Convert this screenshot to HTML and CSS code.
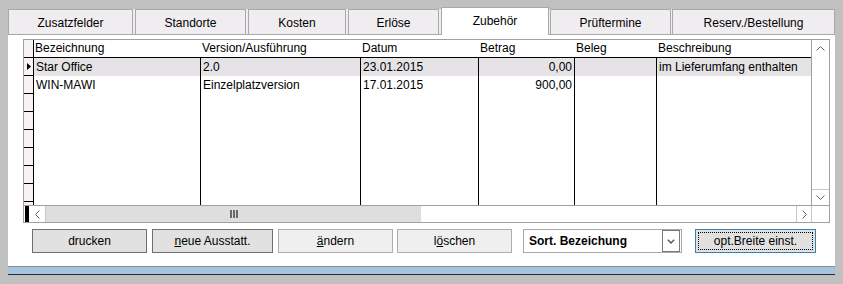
FILE: index.html
```html
<!DOCTYPE html>
<html lang="de">
<head>
<meta charset="UTF-8" />
<title>Zubehör</title>
<link rel="stylesheet" href="styles.css">
</head>
<body>

<div class="window">
  <!-- Tab strip -->
  <div class="tabs">
    <div class="tab tab-zusatz">Zusatzfelder</div>
    <div class="tab tab-standorte">Standorte</div>
    <div class="tab tab-kosten">Kosten</div>
    <div class="tab tab-erloese">Erlöse</div>
    <div class="tab tab-zubehoer active">Zubehör</div>
    <div class="tab tab-pruef">Prüftermine</div>
    <div class="tab tab-reserv">Reserv./Bestellung</div>
  </div>

  <div class="panel">
    <!-- Data grid -->
    <div class="grid">
      <div class="grid-main">
        <div class="grid-data">
          <div class="row head">
            <div class="cell ind"></div>
            <div class="cell c-bez">Bezeichnung</div>
            <div class="cell c-ver">Version/Ausführung</div>
            <div class="cell c-dat">Datum</div>
            <div class="cell c-bet">Betrag</div>
            <div class="cell c-bel">Beleg</div>
            <div class="cell c-bes">Beschreibung</div>
          </div>
          <div class="row sel">
            <div class="cell ind current">
              <svg width="5" height="7" viewBox="0 0 5 7"><path d="M0 0 L4 3.5 L0 7 Z" fill="#000"/></svg>
            </div>
            <div class="cell c-bez">Star Office</div>
            <div class="cell c-ver">2.0</div>
            <div class="cell c-dat">23.01.2015</div>
            <div class="cell c-bet num">0,00</div>
            <div class="cell c-bel"></div>
            <div class="cell c-bes">im Lieferumfang enthalten</div>
          </div>
          <div class="row">
            <div class="cell ind"></div>
            <div class="cell c-bez">WIN-MAWI</div>
            <div class="cell c-ver">Einzelplatzversion</div>
            <div class="cell c-dat">17.01.2015</div>
            <div class="cell c-bet num">900,00</div>
            <div class="cell c-bel"></div>
            <div class="cell c-bes"></div>
          </div>
          <div class="row"><div class="cell ind"></div><div class="cell c-bez"></div><div class="cell c-ver"></div><div class="cell c-dat"></div><div class="cell c-bet"></div><div class="cell c-bel"></div><div class="cell c-bes"></div></div>
          <div class="row"><div class="cell ind"></div><div class="cell c-bez"></div><div class="cell c-ver"></div><div class="cell c-dat"></div><div class="cell c-bet"></div><div class="cell c-bel"></div><div class="cell c-bes"></div></div>
          <div class="row"><div class="cell ind"></div><div class="cell c-bez"></div><div class="cell c-ver"></div><div class="cell c-dat"></div><div class="cell c-bet"></div><div class="cell c-bel"></div><div class="cell c-bes"></div></div>
          <div class="row"><div class="cell ind"></div><div class="cell c-bez"></div><div class="cell c-ver"></div><div class="cell c-dat"></div><div class="cell c-bet"></div><div class="cell c-bel"></div><div class="cell c-bes"></div></div>
          <div class="row"><div class="cell ind"></div><div class="cell c-bez"></div><div class="cell c-ver"></div><div class="cell c-dat"></div><div class="cell c-bet"></div><div class="cell c-bel"></div><div class="cell c-bes"></div></div>
          <div class="row"><div class="cell ind"></div><div class="cell c-bez"></div><div class="cell c-ver"></div><div class="cell c-dat"></div><div class="cell c-bet"></div><div class="cell c-bel"></div><div class="cell c-bes"></div></div>
          <div class="row"><div class="cell ind"></div><div class="cell c-bez"></div><div class="cell c-ver"></div><div class="cell c-dat"></div><div class="cell c-bet"></div><div class="cell c-bel"></div><div class="cell c-bes"></div></div>
        </div>
        <!-- Vertical scrollbar -->
        <div class="vscroll">
          <div class="vs-btn">
            <svg width="9" height="5" viewBox="0 0 9 5"><path d="M0.5 4.5 L4.5 0.5 L8.5 4.5" fill="none" stroke="#606060"/></svg>
          </div>
          <div class="vs-btn down">
            <svg width="9" height="5" viewBox="0 0 9 5"><path d="M0.5 0.5 L4.5 4.5 L8.5 0.5" fill="none" stroke="#606060"/></svg>
          </div>
        </div>
      </div>
      <!-- Horizontal scrollbar -->
      <div class="grid-foot">
        <div class="hscroll">
          <div class="hs-mark"></div>
          <div class="hs-btn left">
            <svg width="5" height="9" viewBox="0 0 5 9"><path d="M4.5 0.5 L0.5 4.5 L4.5 8.5" fill="none" stroke="#606060"/></svg>
          </div>
          <div class="hs-thumb">
            <svg width="8" height="8" viewBox="0 0 8 8"><rect x="0" y="0" width="2" height="8" fill="#6a6a6a"/><rect x="3" y="0" width="2" height="8" fill="#6a6a6a"/><rect x="6" y="0" width="2" height="8" fill="#6a6a6a"/></svg>
          </div>
          <div class="hs-track"></div>
          <div class="hs-btn right">
            <svg width="5" height="9" viewBox="0 0 5 9"><path d="M0.5 0.5 L4.5 4.5 L0.5 8.5" fill="none" stroke="#606060"/></svg>
          </div>
        </div>
        <div class="corner"></div>
      </div>
    </div>

    <!-- Action buttons -->
    <div class="actions">
      <button class="btn btn-print">drucken</button>
      <button class="btn btn-new"><u>n</u>eue Ausstatt.</button>
      <button class="btn soft btn-edit"><u>ä</u>ndern</button>
      <button class="btn soft btn-del">l<u>ö</u>schen</button>
      <div class="combo">
        <span class="combo-text">Sort. Bezeichung</span>
        <span class="combo-btn">
          <svg width="8" height="5" viewBox="0 0 8 5"><path d="M0.8 0.8 L4 4 L7.2 0.8" fill="none" stroke="#555" stroke-width="1.4"/></svg>
        </span>
      </div>
      <button class="btn btn-width">opt.Breite einst.</button>
    </div>
  </div>

  <div class="status"></div>
</div>

</body>
</html>
```

FILE: styles.css
```css
/* Base */
* {
  box-sizing: border-box;
}
body {
  margin: 0;
  height: 284px;
  overflow: hidden;
  background-color: #c0c0c0;
  font-family: "Liberation Sans", Arial, sans-serif;
  font-size: 12px;
  color: #000;
}
.window {
  width: 835px;
  padding: 7px 0 0 8px;
}
/* Tab strip */
.tabs {
  display: flex;
  align-items: flex-end;
  height: 28px;
  background:
    linear-gradient(#a9a9a9, #a9a9a9) bottom / 100% 1px no-repeat,
    linear-gradient(transparent 2px, #f0edf0 2px);
}
.tab {
  height: 26px;
  border: 1px solid #a9a9a9;
  background-color: #f0edf0;
  display: flex;
  align-items: center;
  justify-content: center;
  padding-top: 2px;
  white-space: nowrap;
}
.tab.active {
  height: 28px;
  background-color: #fff;
  border-bottom: none;
  padding-top: 0;
  padding-bottom: 2px;
}
.tab-zusatz { width: 125px; }
.tab-standorte { width: 111px; margin-left: 2px; }
.tab-kosten { width: 98px; margin-left: 2px; }
.tab-erloese { width: 91px; margin-left: 2px; }
.tab-zubehoer { width: 108px; margin-left: 2px; }
.tab-pruef { width: 121px; margin-left: 1px; }
.tab-reserv { width: 163px; margin-left: 1px; }
/* White panel */
.panel {
  width: 827px;
  height: 231px;
  background-color: #fff;
  padding: 4px 0 0 15px;
}
/* Grid */
.grid {
  width: 807px;
  height: 184px;
  border: 1px solid #a0a0a0;
  display: flex;
  flex-direction: column;
}
.grid-main {
  display: flex;
  height: 165px;
}
.grid-data {
  width: 787px;
  overflow: hidden;
}
.row {
  display: flex;
  height: 18px;
}
.cell {
  height: 18px;
  line-height: 18px;
  padding: 0 2px;
  border-right: 1px solid #000;
  white-space: nowrap;
  overflow: hidden;
}
.row.head .cell {
  line-height: 17px;
  padding-left: 1px;
  border-right: none;
  border-bottom: 1px solid #000;
}
.cell.ind,
.row.head .cell.ind {
  width: 10px;
  padding: 0;
  background-color: #f6f2f6;
  border-right: 1px solid #000;
  border-bottom: 1px solid #000;
  display: flex;
  align-items: center;
  justify-content: center;
}
.cell.ind.current {
  padding-left: 2px;
}
.row.sel .cell:not(.ind) {
  background-color: #e6e3e6;
}
.c-bez { width: 167px; }
.c-ver { width: 160px; }
.c-dat { width: 118px; }
.c-bet { width: 96px; }
.c-bel { width: 82px; }
.c-bes {
  flex: 1;
  border-right: none;
}
.cell.num {
  text-align: right;
}
/* Vertical scrollbar */
.vscroll {
  width: 18px;
  border-left: 1px solid #a0a0a0;
  display: flex;
  flex-direction: column;
  justify-content: space-between;
}
.vs-btn {
  height: 17px;
  display: flex;
  align-items: center;
  justify-content: center;
}
.vs-btn.down {
  height: 16px;
  border-top: 1px solid #c8c8c8;
}
/* Horizontal scrollbar */
.grid-foot {
  display: flex;
  height: 17px;
  border-top: 1px solid #a0a0a0;
}
.hscroll {
  width: 787px;
  display: flex;
}
.hs-mark {
  width: 4px;
  margin-left: 1px;
  background-color: #000;
}
.hs-btn {
  display: flex;
  align-items: center;
  justify-content: center;
}
.hs-btn.left {
  width: 17px;
  border-right: 1px solid #c8c8c8;
}
.hs-btn.right {
  width: 15px;
  border-left: 1px solid #c8c8c8;
}
.hs-thumb {
  width: 375px;
  background-color: #dedede;
  display: flex;
  align-items: center;
  justify-content: center;
}
.hs-track {
  flex: 1;
}
.corner {
  width: 18px;
  border-left: 1px solid #c8c8c8;
}
/* Buttons */
.actions {
  display: flex;
  margin-top: 6px;
  padding-left: 9px;
}
.btn {
  height: 24px;
  padding: 0;
  border: 1px solid #707070;
  background-color: #e1e1e1;
  font: inherit;
  color: #000;
  display: flex;
  align-items: center;
  justify-content: center;
}
.btn.soft {
  border-color: #adadad;
  background-color: #efefef;
}
.btn-print { width: 115px; }
.btn-new { width: 121px; margin-left: 5px; }
.btn-edit { width: 115px; margin-left: 5px; }
.btn-del { width: 115px; margin-left: 4px; }
.btn-width {
  width: 121px;
  margin-left: 13px;
  border-color: #3c7fb1;
  position: relative;
}
.btn-width::after {
  content: "";
  position: absolute;
  inset: 2px;
  border: 1px dotted #000;
}
/* Sort combo */
.combo {
  width: 159px;
  height: 24px;
  margin-left: 11px;
  border: 1px solid #a9a9a9;
  background-color: #fff;
  display: flex;
  align-items: center;
}
.combo-text {
  flex: 1;
  padding-left: 5px;
  font-weight: bold;
}
.combo-btn {
  width: 18px;
  height: 22px;
  margin-right: 1px;
  border: 1px solid #7a7a7a;
  display: flex;
  align-items: center;
  justify-content: center;
}
/* Bottom status strip */
.status {
  width: 827px;
  height: 9px;
  background-color: #a6c4e0;
  border-top: 1px solid #8c8c8c;
  border-bottom: 1px solid #2b2b2b;
}
```
